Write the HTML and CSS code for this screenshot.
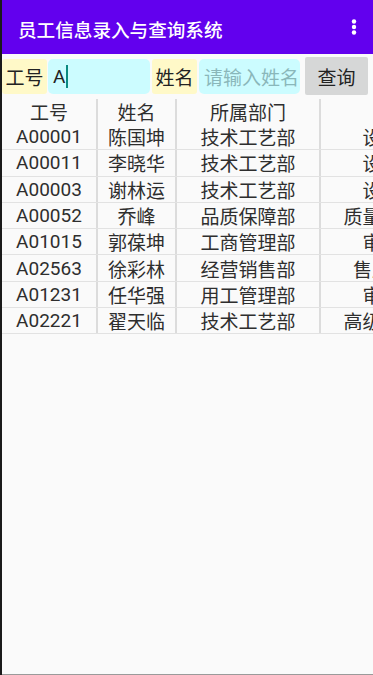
FILE: index.html
```html
<!DOCTYPE html>
<html lang="zh">
<head>
    <meta charset="UTF-8">
    <meta name="viewport" content="width=device-width, initial-scale=1.0">
    <title>员工信息录入与查询系统</title>
    <link rel="stylesheet" href="styles.css">
</head>
<body>
    <div class="screen">
        <header class="app-bar">
            <h1 class="title">员工信息录入与查询系统</h1>
            <svg class="menu" width="10" height="20" viewBox="0 0 10 20">
                <circle cx="5" cy="4.5" r="2.2" fill="#fff"/>
                <circle cx="5" cy="10" r="2.2" fill="#fff"/>
                <circle cx="5" cy="15.5" r="2.2" fill="#fff"/>
            </svg>
        </header>

        <div class="search-row">
            <span class="label label-id">工号</span>
            <div class="field field-id"><span class="value">A</span><span class="caret"></span></div>
            <span class="label label-name">姓名</span>
            <div class="field field-name"><span class="placeholder">请输入姓名</span></div>
            <button class="btn-query">查询</button>
        </div>

        <div class="table">
            <div class="row head">
                <div class="cell c1">工号</div>
                <div class="cell c2">姓名</div>
                <div class="cell c3">所属部门</div>
                <div class="cell c4"></div>
            </div>
            <div class="row">
                <div class="cell c1">A00001</div>
                <div class="cell c2">陈国坤</div>
                <div class="cell c3">技术工艺部</div>
                <div class="cell c4">设计员</div>
            </div>
            <div class="row">
                <div class="cell c1">A00011</div>
                <div class="cell c2">李晓华</div>
                <div class="cell c3">技术工艺部</div>
                <div class="cell c4">设计员</div>
            </div>
            <div class="row">
                <div class="cell c1">A00003</div>
                <div class="cell c2">谢林运</div>
                <div class="cell c3">技术工艺部</div>
                <div class="cell c4">设计员</div>
            </div>
            <div class="row">
                <div class="cell c1">A00052</div>
                <div class="cell c2">乔峰</div>
                <div class="cell c3">品质保障部</div>
                <div class="cell c4">质量检测员</div>
            </div>
            <div class="row">
                <div class="cell c1">A01015</div>
                <div class="cell c2">郭葆坤</div>
                <div class="cell c3">工商管理部</div>
                <div class="cell c4">审核员</div>
            </div>
            <div class="row">
                <div class="cell c1">A02563</div>
                <div class="cell c2">徐彩林</div>
                <div class="cell c3">经营销售部</div>
                <div class="cell c4">售后专员</div>
            </div>
            <div class="row">
                <div class="cell c1">A01231</div>
                <div class="cell c2">任华强</div>
                <div class="cell c3">用工管理部</div>
                <div class="cell c4">审核员</div>
            </div>
            <div class="row">
                <div class="cell c1">A02221</div>
                <div class="cell c2">翟天临</div>
                <div class="cell c3">技术工艺部</div>
                <div class="cell c4">高级工程师</div>
            </div>
        </div>
    </div>
</body>
</html>
```

FILE: styles.css
```css
html, body {
    margin: 0;
    padding: 0;
}
body {
    background-color: #1a1a1a;
    font-family: Roboto, "Noto Sans CJK SC", sans-serif;
}
.screen {
    width: 371px;
    height: 674px;
    margin-left: 2px;
    background-color: #fafafa;
    border-bottom: 1px solid #9a9a9a;
    overflow: hidden;
}
.app-bar {
    height: 54px;
    background-color: #6200ee;
    display: flex;
    align-items: center;
    justify-content: space-between;
    padding: 0 16px 0 16px;
    box-sizing: border-box;
}
.title {
    margin: 0;
    color: #fff;
    font-size: 18.6px;
    font-weight: 500;
    padding-top: 2px;
}
.menu {
    display: block;
    margin-right: -2px;
}
.search-row {
    display: flex;
    align-items: center;
    height: 38px;
    margin-top: 3px;
}
.label {
    height: 35px;
    display: flex;
    align-items: center;
    justify-content: center;
    background-color: #fff9c8;
    color: #222;
    font-size: 19px;
    width: 45px;
    border-radius: 3px;
}
.label-name {
    margin-left: 2px;
}
.field {
    height: 35px;
    display: flex;
    align-items: center;
    background-color: #ccfcff;
    border-radius: 5px;
    font-size: 19px;
    padding-left: 5px;
    box-sizing: border-box;
}
.field-id {
    width: 102px;
    margin-left: 1px;
    color: #222;
}
.field-name {
    width: 101px;
    margin-left: 2px;
}
.caret {
    display: inline-block;
    width: 2px;
    height: 23px;
    background-color: #0a8a80;
    margin-left: 1px;
}
.placeholder {
    color: #8ab7ba;
}
.btn-query {
    margin-left: 5px;
    width: 63px;
    height: 38px;
    border: none;
    border-radius: 2px;
    background-color: #d6d7d7;
    color: #222;
    font-family: Roboto, "Noto Sans CJK SC", sans-serif;
    font-size: 19px;
    padding: 0;
}
.table {
    margin-top: 4px;
    width: 459px;
}
.row {
    display: flex;
    height: 26.3px;
    border-bottom: 1px solid #e2e2e2;
    box-sizing: border-box;
}
.row.head {
    height: 25px;
    border-bottom: none;
}
.cell {
    display: flex;
    align-items: center;
    justify-content: center;
    font-size: 19px;
    color: #2e2e2e;
    white-space: nowrap;
    box-sizing: border-box;
}
.c1 {
    width: 96px;
    border-right: 2px solid #dcdcdc;
}
.c2 {
    width: 79px;
    border-right: 2px solid #dcdcdc;
}
.c3 {
    width: 144px;
    border-right: 2px solid #dcdcdc;
}
.c4 {
    width: 140px;
}
```
